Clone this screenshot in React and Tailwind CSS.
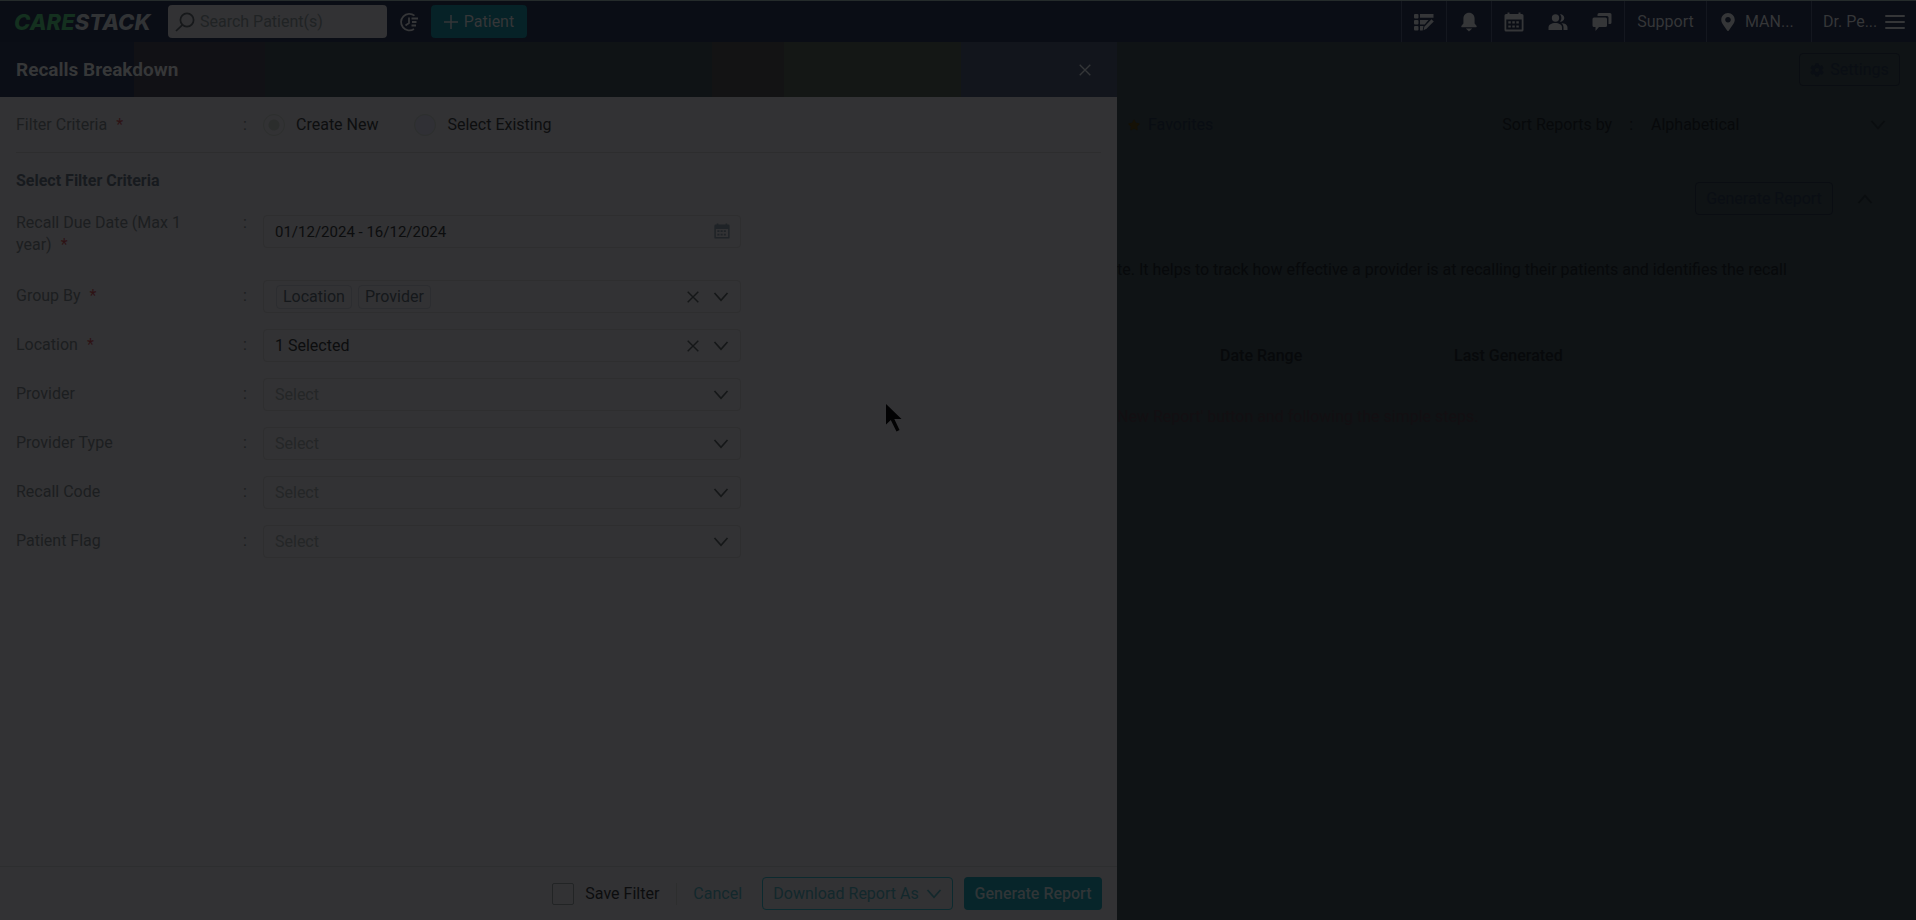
import React, { useState } from 'react';
import { FaMapMarkerAlt, FaCog, FaStar } from 'react-icons/fa';

const selectFields = [
  { id: 'location', label: 'Location', required: true, value: '1 Selected', clearable: true },
  { id: 'provider', label: 'Provider', value: 'Select' },
  { id: 'providerType', label: 'Provider Type', value: 'Select' },
  { id: 'recallCode', label: 'Recall Code', value: 'Select' },
  { id: 'patientFlag', label: 'Patient Flag', value: 'Select' },
];

/* ICONS */
const Chevron = ({ className = '' }) => (
  <svg viewBox="0 0 16 10" fill="none" stroke="currentColor" strokeWidth="1.6" className={`w-4 h-[10px] ${className}`}>
    <path d="M1.5 1 8 8.2 14.5 1" />
  </svg>
);

const Cross = () => (
  <svg viewBox="0 0 12 12" fill="none" stroke="currentColor" strokeWidth="1.4" className="w-3 h-3">
    <path d="M.7.7l10.6 10.6M11.3.7.7 11.3" />
  </svg>
);

const SearchIcon = () => (
  <svg viewBox="0 0 20 20" fill="none" stroke="currentColor" strokeWidth="1.7" className="w-5 h-5 shrink-0">
    <circle cx="12" cy="8" r="6.6" />
    <path d="M7.4 12.8 1 19" />
  </svg>
);

const RecentIcon = () => (
  <svg viewBox="0 0 20 20" fill="none" stroke="currentColor" strokeWidth="1.8" className="w-5 h-5">
    <path d="M15.5 3.6A8.3 8.3 0 1 0 15 17" />
    <path d="M10 5.5V11l-3.5 2.5M12.5 6.5H19M13 10h4.5M12.5 13.5H17" />
  </svg>
);

const TasksIcon = () => (
  <svg viewBox="0 0 20 18" fill="currentColor" className="w-5 h-[18px]">
    <rect x="0" y="1" width="4.5" height="4.5" rx="1" />
    <rect x="0" y="7" width="4.5" height="4.5" rx="1" />
    <rect x="0" y="13" width="4.5" height="4.5" rx="1" />
    <path d="M6 1h13.5v3.8H6zM6 7h8.5l-3.8 4.5H6zM6 13h3.5l-.8 4.5H6z" />
    <path d="M17.5 6.3l2.3 2.2-7.3 7.3-3 1.5.8-3.5z" />
  </svg>
);

const BellIcon = () => (
  <svg viewBox="0 0 16 20" fill="currentColor" className="w-4 h-5">
    <path d="M8 .8c3.4 0 5.6 2.5 5.6 5.7v5l1.9 2.2c.5.7.2 1.6-.7 1.6H1.2c-.9 0-1.2-.9-.7-1.6l1.9-2.2v-5C2.4 3.3 4.6.8 8 .8z" />
    <path d="M4.800 16.500h6.400L8 19.400z" />
  </svg>
);

const CalendarIcon = ({ className }) => (
  <svg viewBox="0 0 20 20" className={className}>
    <path
      fill="currentColor"
      fillRule="evenodd"
      d="M3.5.5h2V2h9V.5h2V2H18a1.5 1.5 0 0 1 1.5 1.5V18a1.5 1.5 0 0 1-1.5 1.5H2A1.500 1.500 0 0 1 .5 18V3.500A1.500 1.500 0 0 1 2 2h1.500zM2.300 7.500v10h15.400v-10z"
    />
    <path stroke="currentColor" strokeWidth="2.2" strokeDasharray="2.5 1.5" d="M4.3 10.3h11.500M4.300 14.500h11.500" />
  </svg>
);

const PeopleIcon = () => (
  <svg viewBox="0 0 20 18" fill="currentColor" className="w-5 h-[18px]">
    <circle cx="7.500" cy="5" r="3.700" />
    <path d="M12 1.300a3.700 3.700 0 1 1 0 7.300 5.400 5.400 0 0 0 0-7.300z" />
    <path d="M.5 17v-2.500c0-3 3-4.500 6.800-4.500s6.700 1.500 6.700 4.500V17z" />
    <path d="M13.300 10c3.700.2 6.200 1.700 6.200 4.500V17h-4v-2.500c0-2-.8-3.500-2.200-4.500z" />
  </svg>
);

const ChatIcon = () => (
  <svg viewBox="0 0 20 20" fill="currentColor" className="w-5 h-5">
    <path d="M7 1h11a1.500 1.500 0 0 1 1.500 1.500v8A1.500 1.500 0 0 1 18 12h-1.500V5.500A1.500 1.500 0 0 0 15 4H5.500V2.500A1.500 1.500 0 0 1 7 1z" />
    <path d="M2 5.500h11.500A1.500 1.500 0 0 1 15 7v6.500a1.500 1.500 0 0 1-1.500 1.500H7l-3.500 4v-4H2a1.500 1.500 0 0 1-1.500-1.500V7A1.500 1.500 0 0 1 2 5.500z" />
  </svg>
);

function TopBar() {
  return (
    <header className="h-[42px] shrink-0 flex items-center border-t border-[#252b2b] bg-[#0a0d15] text-[#353638]">
      <a href="#" className="w-[153px] pl-[14px] whitespace-nowrap font-['Inter'] font-extrabold italic text-[22px] leading-8 text-[#313335]">
        <span className="text-[#14301f]">CARE</span>STACK
      </a>
      <label className="ml-[15px] w-[219px] h-[33px] flex items-center gap-[5px] pl-[7px] rounded bg-[#323234] text-[#16181a]">
        <SearchIcon />
        <input aria-label="Search patients" placeholder="Search Patient(s)" className="w-full min-w-0 outline-none placeholder:text-[#202324]" />
      </label>
      <button aria-label="Recent patients" className="ml-3"><RecentIcon /></button>
      <button className="ml-3 w-24 h-[33px] flex items-center justify-center gap-[6px] rounded bg-[#062227]">
        <svg viewBox="0 0 14 14" stroke="currentColor" strokeWidth="1.5" className="w-[14px] h-[14px]"><path d="M7 0v14M0 7h14" /></svg>
        Patient
      </button>

      <nav className="ml-auto h-full flex items-stretch">
        <button aria-label="Tasks" className="w-[45px] flex items-center justify-center border-l border-[#14171f]"><TasksIcon /></button>
        <button aria-label="Notifications" className="w-[45px] flex items-center justify-center border-l border-[#14171f]"><BellIcon /></button>
        <div className="w-[133px] flex items-center justify-between px-3 border-l border-[#14171f]">
          <button aria-label="Schedule"><CalendarIcon className="w-5 h-5" /></button>
          <button aria-label="Patients"><PeopleIcon /></button>
          <button aria-label="Messages"><ChatIcon /></button>
        </div>
        <button className="w-[82px] border-l border-[#14171f]">Support</button>
        <button className="w-[105px] flex items-center gap-2 pl-3 border-l border-[#14171f]">
          <FaMapMarkerAlt size={18} />MAN...
        </button>
        <button className="w-[105px] flex items-center gap-2 pl-[11px] border-l border-[#14171f]">
          Dr. Pe...
          <svg viewBox="0 0 20 16" stroke="currentColor" strokeWidth="2" strokeLinecap="round" className="w-5 h-4"><path d="M1 2h18M1 8h18M1 14h18" /></svg>
        </button>
      </nav>
    </header>
  );
}

function Row({ label, id, required, children }) {
  return (
    <div className="flex min-h-[33px]">
      <label htmlFor={id} className="w-[184px] shrink-0 pr-2 pt-[5px] text-[#1c1e20]">
        {label}
        {required && <span className="ml-[9px] text-[#2e1214]">*</span>}
      </label>
      <span className="w-[46px] shrink-0 pl-[43px] pt-[5px] text-[#1c1e20]">:</span>
      <div className="ml-[17px] w-full max-w-[478px]">{children}</div>
    </div>
  );
}

function SelectBox({ field }) {
  return (
    <div className="relative">
      <select
        id={field.id}
        className={`block w-full h-[33px] appearance-none rounded border border-[#2e2e2f] pl-[11px] outline-none ${field.clearable ? 'text-[#0c0d0e]' : 'text-[#242627]'}`}
      >
        <option>{field.value}</option>
      </select>
      <div className="absolute inset-y-0 right-3 flex items-center gap-[14px] text-[#151718] pointer-events-none">
        {field.clearable && <Cross />}
        <Chevron />
      </div>
    </div>
  );
}

function RecallsDrawer() {
  const [mode, setMode] = useState('new');
  const [range, setRange] = useState('01/12/2024 - 16/12/2024');
  const radio = 'appearance-none w-[22px] h-[22px] rounded-full border border-[#2d2f2e]';

  return (
    <aside className="w-[58.3%] shrink-0 flex flex-col bg-[#323234]">
      <div className="h-[55px] shrink-0 flex items-center justify-between pl-4 pr-[26px] bg-[linear-gradient(90deg,#0b0e16_12%,#111115_12%_23.700%,#0f1315_23.700%_63.700%,#131314_63.700%_70.200%,#141715_70.200%_86%,#12151c_86%)]">
        <h1 className="text-[19px] font-bold text-[#363738]">Recalls Breakdown</h1>
        <button aria-label="Close" className="text-[#343638]"><Cross /></button>
      </div>

      <div className="flex-1 px-4">
        <div role="radiogroup" aria-label="Filter Criteria" className="h-[56px] flex items-center border-b border-[#2d2d2e] text-[#0d0e0f]">
          <span className="w-[184px] text-[#1c1e20]">Filter Criteria<span className="ml-[9px] text-[#2e1214]">*</span></span>
          <span className="w-[46px] pl-[43px] text-[#1c1e20]">:</span>
          <label className="ml-[17px] flex items-center gap-[11px]">
            <input type="radio" name="mode" checked={mode === 'new'} onChange={() => setMode('new')} className={`${radio} checked:bg-[radial-gradient(#2b2d2c_0_5px,transparent_6px)]`} />
            Create New
          </label>
          <label className="ml-9 flex items-center gap-[11px]">
            <input type="radio" name="mode" checked={mode === 'existing'} onChange={() => setMode('existing')} className={`${radio} bg-[#303035] checked:bg-[radial-gradient(#2b2d2c_0_5px,transparent_6px)]`} />
            Select Existing
          </label>
        </div>

        <h2 className="mt-[17px] font-bold text-[#171a1e]">Select Filter Criteria</h2>

        <div className="mt-[15px] flex flex-col gap-4">
          <div className="h-[57px]">
            <Row label="Recall Due Date (Max 1 year)" id="dueDate" required>
              <div className="mt-2 relative">
                <input
                  id="dueDate"
                  value={range}
                  onChange={(e) => setRange(e.target.value)}
                  className="block w-full h-[33px] rounded border border-[#2e2e2f] pl-[11px] text-[15px] text-[#0c0d0e] outline-none"
                />
                <CalendarIcon className="absolute right-[11px] top-2 w-4 h-4 text-[#1f2327]" />
              </div>
            </Row>
          </div>

          <Row label="Group By" id="groupBy" required>
            <div id="groupBy" className="h-[33px] flex items-center gap-[6px] rounded border border-[#2e2e2f] pl-3 pr-[11px] text-[#15181b]">
              <span className="h-6 flex items-center rounded border border-[#2c2d30] px-[6px]">Location</span>
              <span className="h-6 flex items-center rounded border border-[#2c2d30] px-[6px]">Provider</span>
              <button aria-label="Clear" className="ml-auto mr-2 text-[#151718]"><Cross /></button>
              <button aria-label="Open" className="text-[#151718]"><Chevron /></button>
            </div>
          </Row>

          {selectFields.map((field) => (
            <Row key={field.id} label={field.label} id={field.id} required={field.required}>
              <SelectBox field={field} />
            </Row>
          ))}
        </div>
      </div>

      <footer className="h-[54px] shrink-0 flex items-center justify-end pr-[15px] border-t border-[#2d2e2f]">
        <label className="flex items-center gap-[11px] text-[#0c0d0e]">
          <input type="checkbox" className="appearance-none w-[22px] h-[22px] rounded-xs border border-[#222425]" />
          Save Filter
        </label>
        <span className="ml-[17px] w-px h-[22px] bg-[#2d2e2e]" />
        <button className="ml-4 text-[#13282c]">Cancel</button>
        <button className="ml-5 w-[191px] h-[33px] flex items-center justify-center gap-[7px] rounded border border-[#0c2a2f] text-[#13282c]">
          Download Report As <Chevron />
        </button>
        <button className="ml-[11px] w-[138px] h-[33px] rounded bg-[#07252a] font-medium text-[#303537]">Generate Report</button>
      </footer>
    </aside>
  );
}

function ReportsPage() {
  return (
    <main className="flex-1 min-w-0 overflow-hidden bg-[#0f1315] text-[#07090b]">
      <div className="mt-[11px] mr-4 flex justify-end">
        <button className="w-[101px] h-[33px] flex items-center justify-center gap-[6px] rounded border border-[#0a0d12] text-[#0a0e14]">
          <FaCog size={14} />Settings
        </button>
      </div>

      <div className="mt-7 pl-[11px] pr-[30px] flex items-center">
        <FaStar size={12} className="text-[#151106]" />
        <button className="ml-2 text-[#090d13]">Favorites</button>
        <label htmlFor="sort" className="ml-auto">Sort Reports by</label>
        <span className="ml-[17px]">:</span>
        <div className="relative ml-[18px] w-[235px]">
          <select id="sort" className="block w-full appearance-none outline-none">
            <option>Alphabetical</option>
          </select>
          <Chevron className="absolute right-0 top-[6px] text-[#0a0d0f] pointer-events-none" />
        </div>
      </div>

      <div className="mt-[46px] pr-[43px] flex items-center justify-end">
        <button className="w-[138px] h-[33px] rounded border border-[#0a0d12] text-[#0a0e14]">Generate Report</button>
        <button aria-label="Collapse" className="ml-6 text-[#0a0d0f]"><Chevron className="rotate-180" /></button>
      </div>

      <p className="mt-11 whitespace-nowrap">
        te. It helps to track how effective a provider is at recalling their patients and identifies the recall
      </p>

      <table className="mt-[60px] w-full table-fixed text-left">
        <thead>
          <tr className="h-[30px]">
            <th className="w-[337px] pl-[103px] font-medium">Date Range</th>
            <th className="font-medium">Last Generated</th>
          </tr>
        </thead>
        <tbody>
          <tr className="h-[92px]">
            <td colSpan={2} className="whitespace-nowrap text-[#130f12]">New Report' button and following the simple steps.</td>
          </tr>
        </tbody>
      </table>
    </main>
  );
}

export default function App() {
  return (
    <div className="relative min-h-screen flex flex-col font-['Roboto',sans-serif] text-[16px] leading-[22px]">
      <TopBar />
      <div className="flex-1 flex">
        <RecallsDrawer />
        <ReportsPage />
      </div>

      {/* pointer */}
      <svg viewBox="0 0 16 28" fill="#020203" className="absolute left-[886px] top-[404px] w-4 h-7 pointer-events-none">
        <path d="M0 0v20.500l4.800-4.500 5.700 11.500 3-1.500L8.300 15H15.500z" />
      </svg>
    </div>
  );
}
